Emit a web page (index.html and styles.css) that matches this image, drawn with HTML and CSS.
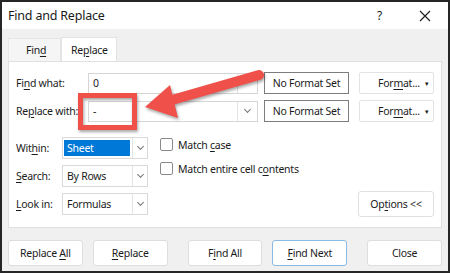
FILE: index.html
```html
<!DOCTYPE html>
<html>
<head>
<meta charset="utf-8">
<link rel="stylesheet" href="styles.css">
</head>
<body>
<div class="window">
  <div class="titlebar">
    <span class="title">Find and Replace</span>
    <span class="help">?</span>
    <span class="close-x"><svg width="12" height="12" viewBox="0 0 12 12"><path d="M1 1 L11 11 M11 1 L1 11" stroke="#222" stroke-width="1.2" fill="none"/></svg></span>
  </div>
  <div class="body">
    <div class="tabs">
      <div class="tab"><span>Fin<u>d</u></span></div>
      <div class="tab active"><span>Re<u>p</u>lace</span></div>
    </div>
    <div class="panel">
      <div class="top-rows">
        <div class="row">
          <span class="lbl">Fi<u>n</u>d what:</span>
          <div class="combo"><span class="val">0</span><span class="drop"></span></div>
          <div class="nfs">No Format Set</div>
          <div class="fmt"><span>For<u>m</u>at...</span><span class="caret">&#9662;</span></div>
        </div>
        <div class="row">
          <span class="lbl">Re<u>p</u>lace with:</span>
          <div class="combo"><span class="val">-</span><span class="drop"><span class="chev"></span></span></div>
          <div class="nfs">No Format Set</div>
          <div class="fmt"><span>For<u>m</u>at...</span><span class="caret">&#9662;</span></div>
        </div>
      </div>
      <div class="lower">
        <div class="opts">
          <span class="lbl2">Wit<u>h</u>in:</span>
          <div class="select"><span class="sval"><span class="sel">Sheet</span></span><span class="drop"><span class="chev"></span></span></div>
          <span class="lbl2"><u>S</u>earch:</span>
          <div class="select"><span class="sval">By Rows</span><span class="drop"><span class="chev"></span></span></div>
          <span class="lbl2"><u>L</u>ook in:</span>
          <div class="select"><span class="sval">Formulas</span><span class="drop"><span class="chev"></span></span></div>
        </div>
        <div class="checks">
          <div class="check"><span class="box"></span><span>Match <u>c</u>ase</span></div>
          <div class="check"><span class="box"></span><span>Match entire cell c<u>o</u>ntents</span></div>
        </div>
        <div class="options-btn"><span>Op<u>t</u>ions &lt;&lt;</span></div>
      </div>
    </div>
    <div class="buttons">
      <div class="btn"><span>Replace <u>A</u>ll</span></div>
      <div class="btn"><span><u>R</u>eplace</span></div>
      <div class="btn gap"><span>F<u>i</u>nd All</span></div>
      <div class="btn primary"><span><u>F</u>ind Next</span></div>
      <div class="btn gap"><span>Close</span></div>
    </div>
  </div>
  <svg class="annot" width="450" height="273" viewBox="0 0 450 273">
    <g class="red">
      <rect x="80.5" y="95.5" width="54" height="32" fill="none" stroke="#f0504a" stroke-width="5"/>
      <line x1="259" y1="75" x2="172" y2="100" stroke="#f0504a" stroke-width="10" stroke-linecap="round"/>
      <polygon points="145,107 170,85 178,118" fill="#f0504a"/>
    </g>
  </svg>
</div>
</body>
</html>
```
FILE: styles.css
```css
* { box-sizing: border-box; }
html, body { margin: 0; padding: 0; }
body {
  width: 450px;
  height: 273px;
  overflow: hidden;
  font-family: "Noto Sans", "Open Sans", sans-serif;
  font-size: 10.5px;
  letter-spacing: -0.25px;
  color: #1b1b1b;
  background: #fff;
}
u { text-decoration: underline; text-underline-offset: 2px; text-decoration-thickness: 1px; }
.window {
  position: relative;
  width: 450px;
  height: 273px;
  border: 2px solid #262626;
  background: #f0f0f0;
}
.titlebar {
  height: 27px;
  background: #fff;
  display: flex;
  align-items: center;
  padding-left: 6px;
}
.title { font-size: 12.5px; letter-spacing: -0.2px; color: #1a1a1a; }
.help { margin-left: auto; font-size: 12px; margin-right: 37px; }
.close-x { display: flex; margin-right: 17px; }
.body {
  padding: 8px 6px 0 6px;
}
.tabs {
  display: flex;
  height: 24px;
  align-items: flex-end;
}
.tab {
  height: 23px;
  width: 53px;
  background: #f5f5f5;
  border: 1px solid #e6e6e6;
  border-bottom: none;
  display: flex;
  align-items: center;
  padding-left: 17px;
}
.tab.active {
  height: 24px;
  width: 56px;
  background: #fff;
  border-color: #e2e2e2;
  padding-left: 9px;
}
.panel {
  height: 167px;
  background: #fff;
  border: 1px solid #e0e0e0;
  padding: 10px 7px 0 7px;
}
.top-rows { display: flex; flex-direction: column; gap: 6px; }
.row { display: flex; align-items: center; height: 22px; }
.lbl { width: 72px; }
.combo {
  width: 170px;
  height: 21px;
  border: 1px solid #d6d6d6;
  display: flex;
  background: #fff;
}
.val { flex: 1; padding-left: 4px; display: flex; align-items: center; }
.drop {
  width: 20px;
  border-left: 1px solid #e3e3e3;
  display: flex;
  align-items: center;
  justify-content: center;
}
.chev {
  width: 5px;
  height: 5px;
  border-right: 1px solid #777;
  border-bottom: 1px solid #777;
  transform: rotate(45deg);
  margin-top: -3px;
}
.nfs {
  margin-left: 6px;
  width: 85px;
  height: 22px;
  border: 1px solid #7d7d7d;
  display: flex;
  align-items: center;
  justify-content: center;
}
.fmt {
  margin-left: 10px;
  width: 75px;
  height: 22px;
  border: 1px solid #e3e3e3;
  border-radius: 2px;
  display: flex;
  align-items: center;
  padding-left: 18px;
  position: relative;
}
.caret { position: absolute; right: 4px; font-size: 7px; top: 6px; }
.lower {
  margin-top: 15px;
  display: flex;
}
.opts {
  display: grid;
  grid-template-columns: 46px 86px;
  grid-auto-rows: 22px;
  row-gap: 6px;
  align-items: center;
}
.select {
  height: 22px;
  border: 1px solid #d9d9d9;
  display: flex;
}
.sval { flex: 1; display: flex; align-items: center; padding-left: 4px; }
.select .drop { width: 15px; }
.sval .sel {
  background: #0078d7;
  color: #fff;
  margin-left: -3px;
  padding-left: 3px;
  width: 66px;
  height: 16px;
  display: flex;
  align-items: center;
}
.checks {
  margin-left: 12px;
  display: flex;
  flex-direction: column;
  gap: 9px;
}
.check { display: flex; align-items: center; height: 15px; }
.box {
  width: 13px;
  height: 13px;
  border: 1px solid #8a8a8a;
  border-radius: 2px;
  margin-right: 5px;
}
.options-btn {
  margin-left: auto;
  align-self: flex-end;
  margin-bottom: -2px;
  width: 76px;
  height: 26px;
  border: 1px solid #e0e0e0;
  border-radius: 3px;
  display: flex;
  align-items: center;
  justify-content: center;
}
.buttons {
  margin-top: 12px;
  display: flex;
}
.btn {
  width: 75px;
  height: 26px;
  border: 1px solid #dedede;
  border-radius: 3px;
  background: #fff;
  display: flex;
  align-items: center;
  justify-content: center;
}
.btn + .btn { margin-left: 10px; }
.btn.gap { margin-left: 20px; }
.btn.primary { border: 1.5px solid #8ab9e4; }
.annot { position: absolute; left: -2px; top: -2px; pointer-events: none; }
.red { filter: drop-shadow(1px 2px 1.5px rgba(0,0,0,0.35)); }
```
